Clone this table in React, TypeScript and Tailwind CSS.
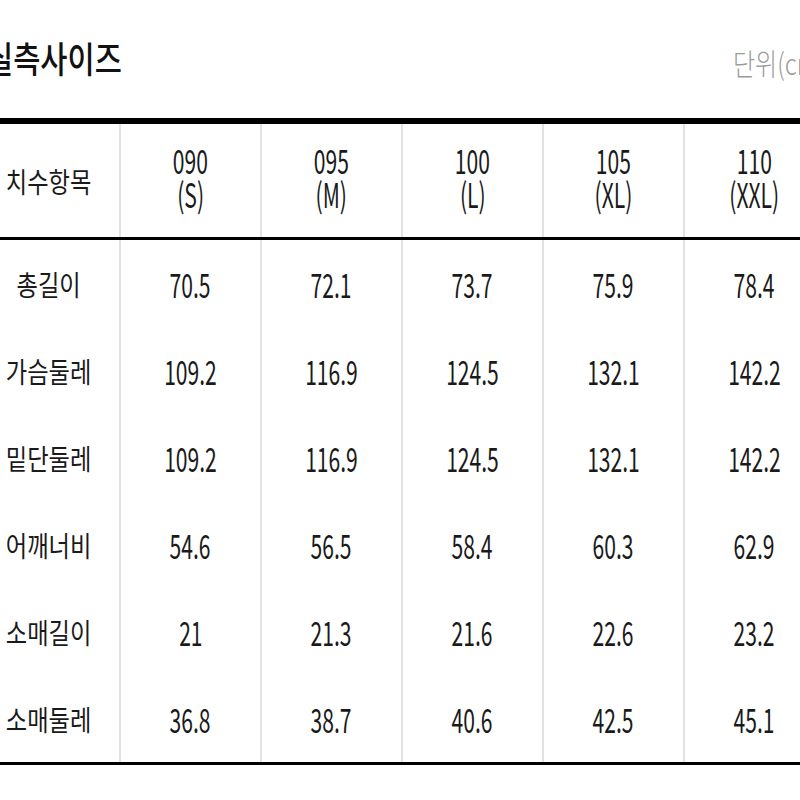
const sizes = [
  ["090", "(S)"],
  ["095", "(M)"],
  ["100", "(L)"],
  ["105", "(XL)"],
  ["110", "(XXL)"],
];

const rows: [string, string[]][] = [
  ["총길이", ["70.5", "72.1", "73.7", "75.9", "78.4"]],
  ["가슴둘레", ["109.2", "116.9", "124.5", "132.1", "142.2"]],
  ["밑단둘레", ["109.2", "116.9", "124.5", "132.1", "142.2"]],
  ["어깨너비", ["54.6", "56.5", "58.4", "60.3", "62.9"]],
  ["소매길이", ["21", "21.3", "21.6", "22.6", "23.2"]],
  ["소매둘레", ["36.8", "38.7", "40.6", "42.5", "45.1"]],
];

const font = { fontFamily: '"Noto Sans CJK KR", "Noto Sans", sans-serif' };

function Num({ children }: { children: string }) {
  return (
    <span className="inline-block scale-x-[0.62] text-[34px] leading-[34px] font-normal text-[#1a1a1a]">
      {children}
    </span>
  );
}

export default function App() {
  return (
    <div className="w-[800px] h-[800px] bg-white overflow-hidden" style={font}>
      <div className="w-[860px] -ml-[22px]">
        <div className="h-[118px] flex items-start">
          <span className="mt-[34px] ml-[8px] inline-block origin-left scale-x-[0.82] text-[36px] leading-[46px] font-medium text-[#111] whitespace-nowrap">
            실측사이즈
          </span>
          <span className="ml-auto mt-[42px] w-[105px] inline-block origin-left scale-x-[0.8] text-[30px] leading-[40px] font-light text-[#9a9a9a] whitespace-nowrap">
            단위(cm)
          </span>
        </div>

        <div className="border-t-[6px] border-b-[3px] border-black">
          <div className="grid grid-cols-[141px_141px_141px_141px_141px_141px] h-[113px]">
            <div className="flex items-center justify-center">
              <span className="inline-block scale-x-[0.83] text-[28px] text-[#1a1a1a]">치수항목</span>
            </div>
            {sizes.map(([n, s]) => (
              <div key={n} className="border-l-2 border-[#e2e2e2] flex flex-col items-center justify-center pb-[8px]">
                <Num>{n}</Num>
                <Num>{s}</Num>
              </div>
            ))}
          </div>
        </div>

        <div className="border-b-[3px] border-black">
          {rows.map(([label, vals]) => (
            <div key={label} className="grid grid-cols-[141px_141px_141px_141px_141px_141px] h-[87px]">
              <div className="flex items-center justify-center">
                <span className="inline-block scale-x-[0.83] text-[28px] text-[#1a1a1a]">{label}</span>
              </div>
              {vals.map((v, i) => (
                <div key={i} className="border-l-2 border-[#e2e2e2] flex items-center justify-center">
                  <Num>{v}</Num>
                </div>
              ))}
            </div>
          ))}
        </div>
      </div>
    </div>
  );
}
